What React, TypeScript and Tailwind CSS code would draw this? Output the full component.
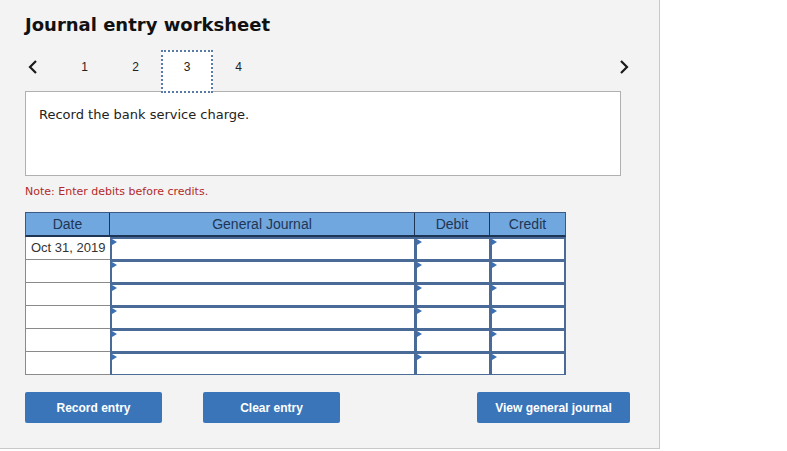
import React from 'react';

const rows = ['Oct 31, 2019', '', '', '', '', ''];

function Chevron({ dir }: { dir: 'left' | 'right' }) {
  return (
    <svg width="10" height="14" viewBox="0 0 10 14" className="block">
      <polyline
        points={dir === 'left' ? '8,1 2,7 8,13' : '2,1 8,7 2,13'}
        fill="none"
        stroke="#1a1a1a"
        strokeWidth="2.2"
      />
    </svg>
  );
}

function InputCell({ width, last }: { width: string; last?: boolean }) {
  return (
    <div
      className={`relative h-[23px] bg-white border-t-2 border-l-2 border-b border-[#4a6a98] ${width} ${
        last ? 'border-r-2' : 'border-r'
      }`}
    >
      <div className="absolute left-0 top-0 w-0 h-0 border-t-[3px] border-b-[3px] border-l-[5px] border-t-transparent border-b-transparent border-l-[#3c70b4]" />
    </div>
  );
}

export default function App() {
  return (
    <div className="w-[787px] h-[451px] bg-white" style={{ fontFamily: 'Arial' }}>
      <div className="w-[660px] h-[449px] bg-[#f3f3f3] border-r border-b border-[#c8c8c8] pl-[25px] pt-[13px]">
        <h1
          className="text-[18px] leading-[24px] font-bold text-[#111]"
          style={{ fontFamily: '"DejaVu Sans", Verdana, sans-serif' }}
        >
          Journal entry worksheet
        </h1>

        {/* step navigation */}
        <div className="flex items-start h-[43px] mt-[13px] w-[596px] relative z-10">
          <div className="w-[34px] pl-[3px] pt-[10px]">
            <Chevron dir="left" />
          </div>
          {['1', '2', '3', '4'].map((n) => (
            <div
              key={n}
              className={`h-[43px] flex justify-center text-[12px] leading-[18px] text-[#222] ${
                n === '3'
                  ? 'bg-white border-2 border-dotted border-[#5a7aa8] w-[52px] pt-[6px]'
                  : 'w-[51px] pt-[8px]'
              }`}
            >
              {n}
            </div>
          ))}
          <div className="flex-1" />
          <div className="w-[20px] flex justify-center -mr-[13px] pt-[10px]">
            <Chevron dir="right" />
          </div>
        </div>

        {/* prompt */}
        <div
          className="w-[596px] h-[85px] -mt-[2px] bg-white border border-[#b0b0b0] pl-[13px] pt-[13px] text-[13px] text-[#222]"
          style={{ fontFamily: '"DejaVu Sans", Verdana, sans-serif' }}
        >
          Record the bank service charge.
        </div>

        <p
          className="mt-[9px] text-[11px] leading-[14px] text-[#b22a2a]"
          style={{ fontFamily: '"DejaVu Sans", Verdana, sans-serif' }}
        >
          Note: Enter debits before credits.
        </p>

        {/* journal table */}
        <div className="mt-[13px] w-[541px]">
          <div className="flex h-[25px] bg-[#70a7de] border border-[#3a5a85] border-b-2 border-b-[#1f3555] text-[14px] text-[#1f3555]">
            <div className="w-[84px] flex items-center justify-center border-r border-[#1f3555]">Date</div>
            <div className="w-[305px] flex items-center justify-center border-r border-[#1f3555]">General Journal</div>
            <div className="w-[75px] flex items-center justify-center border-r border-[#1f3555]">Debit</div>
            <div className="flex-1 flex items-center justify-center">Credit</div>
          </div>
          {rows.map((d, i) => (
            <div key={i} className="flex">
              <div className="w-[85px] h-[23px] bg-white border-l border-b border-[#8a8a8a] flex items-center pl-[5px] text-[13px] text-[#333]">
                {d}
              </div>
              <InputCell width="w-[305px]" />
              <InputCell width="w-[75px]" />
              <InputCell width="w-[76px]" last />
            </div>
          ))}
        </div>

        {/* actions */}
        <div className="flex mt-[17px] w-[605px] text-[12px] font-bold text-white">
          <button className="w-[137px] h-[31px] rounded-[2px] bg-[#3a75b9]">Record entry</button>
          <button className="w-[137px] h-[31px] rounded-[2px] bg-[#3a75b9] ml-[41px]">Clear entry</button>
          <div className="flex-1" />
          <button className="w-[153px] h-[31px] rounded-[2px] bg-[#3a75b9]">View general journal</button>
        </div>
      </div>
    </div>
  );
}
